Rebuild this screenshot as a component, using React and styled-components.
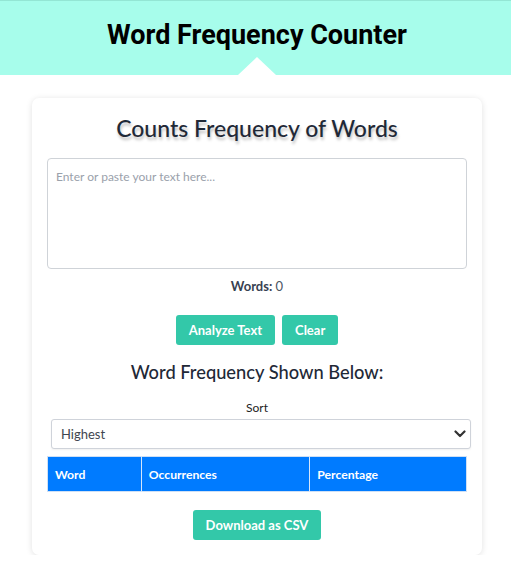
import React, { useState } from "react";
import styled, { createGlobalStyle } from "styled-components";

const Global = createGlobalStyle`
  html, body { margin: 0; padding: 0; background: #ffffff; }
  body { font-family: Lato, "Noto Sans", sans-serif; }
  * { box-sizing: border-box; }
`;

const Header = styled.header`
  position: relative;
  height: 75px;
  background: #a7fdeb;
  border-top: 1px solid #93e6d4;
  display: flex;
  align-items: center;
  justify-content: center;
  padding-left: 3px;
  &::after {
    content: "";
    position: absolute;
    left: calc(50% + 1.5px - 19px);
    bottom: 0;
    border-left: 19px solid transparent;
    border-right: 19px solid transparent;
    border-bottom: 18px solid #ffffff;
  }
`;

const HeaderTitle = styled.h1`
  margin: 0 0 6px;
  font-family: Roboto, "Liberation Sans", sans-serif;
  font-weight: 700;
  font-size: 27px;
  color: #000;
`;

const Main = styled.main`
  padding: 23px 0 0 3px;
  display: flex;
  justify-content: center;
`;

const Card = styled.section`
  width: 450px;
  background: #fff;
  border-radius: 7px;
  box-shadow: 0 1px 6px rgba(0, 0, 0, 0.12);
  padding: 15px 15px 15px;
  display: flex;
  flex-direction: column;
  align-items: center;
`;

const Title = styled.h2`
  margin: 0 0 15px;
  font-size: 23px;
  font-weight: 500;
  color: #1f2937;
  line-height: 30px;
  text-shadow: 1px 3px 3px rgba(0, 0, 0, 0.25);
`;

const TextArea = styled.textarea`
  width: 420px;
  height: 111px;
  border: 1px solid #cfd3d8;
  border-radius: 4px;
  padding: 10px 8px;
  font-family: inherit;
  font-size: 12px;
  resize: none;
  outline: none;
  &::placeholder { color: #9aa1ab; }
`;

const Count = styled.p`
  margin: 8px 0 0;
  font-size: 13px;
  color: #374151;
  line-height: 18px;
  b { font-weight: 700; }
  span { color: #4b5563; }
`;

const ButtonRow = styled.div`
  display: flex;
  gap: 7px;
  margin-top: 20px;
`;

const Button = styled.button`
  height: 30px;
  padding: 0 13px;
  border: none;
  border-radius: 3px;
  background: #33c8a9;
  color: #fff;
  font-family: inherit;
  font-weight: 700;
  font-size: 13px;
  cursor: pointer;
`;

const SubTitle = styled.h3`
  margin: 14px 0 0;
  font-size: 18.3px;
  font-weight: 500;
  color: #1f2937;
  line-height: 26px;
`;

const Label = styled.label`
  margin-top: 15px;
  font-size: 12px;
  color: #222;
  line-height: 16px;
`;

const SelectWrap = styled.div`
  position: relative;
  width: 420px;
  margin: 3px 0 0 8px;
`;

const Select = styled.select`
  width: 100%;
  height: 30px;
  appearance: none;
  border: 1px solid #cfd3da;
  border-radius: 3px;
  background: #fff;
  padding: 0 9px;
  font-family: inherit;
  font-size: 13px;
  color: #3f4650;
  box-shadow: 0 1px 2px rgba(0,0,0,0.06);
`;

const Chevron = styled.svg`
  position: absolute;
  right: 5px;
  top: 11px;
  pointer-events: none;
`;

const Table = styled.table`
  width: 420px;
  margin-top: 7px;
  border-collapse: collapse;
  background: #007bff;
  border: 1px solid #cfe0f5;
`;

const Th = styled.th`
  height: 35px;
  width: ${(p) => p.$w}px;
  text-align: left;
  padding: 0 7px;
  color: #fff;
  font-size: 12.2px;
  font-weight: 700;
  border-left: 1px solid #d5e6fb;
  &:first-child { border-left: none; }
`;

const Download = styled(Button)`
  margin-top: 18px;
`;

export default function App() {
  const [text, setText] = useState("");
  return (
    <>
      <Global />
      <Header>
        <HeaderTitle>Word Frequency Counter</HeaderTitle>
      </Header>
      <Main>
        <Card>
          <Title>Counts Frequency of Words</Title>
          <TextArea
            placeholder="Enter or paste your text here..."
            value={text}
            onChange={(e) => setText(e.target.value)}
          />
          <Count>
            <b>Words:</b> <span>0</span>
          </Count>
          <ButtonRow>
            <Button>Analyze Text</Button>
            <Button>Clear</Button>
          </ButtonRow>
          <SubTitle>Word Frequency Shown Below:</SubTitle>
          <Label htmlFor="sort">Sort</Label>
          <SelectWrap>
            <Select id="sort" defaultValue="highest">
              <option value="highest">Highest</option>
              <option value="lowest">Lowest</option>
            </Select>
            <Chevron width="12" height="8" viewBox="0 0 12 8">
              <path d="M1.5 1.5 L6 6 L10.5 1.5" fill="none" stroke="#333" strokeWidth="2.2" strokeLinecap="round" strokeLinejoin="round" />
            </Chevron>
          </SelectWrap>
          <Table>
            <thead>
              <tr>
                <Th $w={94}>Word</Th>
                <Th $w={169}>Occurrences</Th>
                <Th $w={157}>Percentage</Th>
              </tr>
            </thead>
          </Table>
          <Download>Download as CSV</Download>
        </Card>
      </Main>
    </>
  );
}
